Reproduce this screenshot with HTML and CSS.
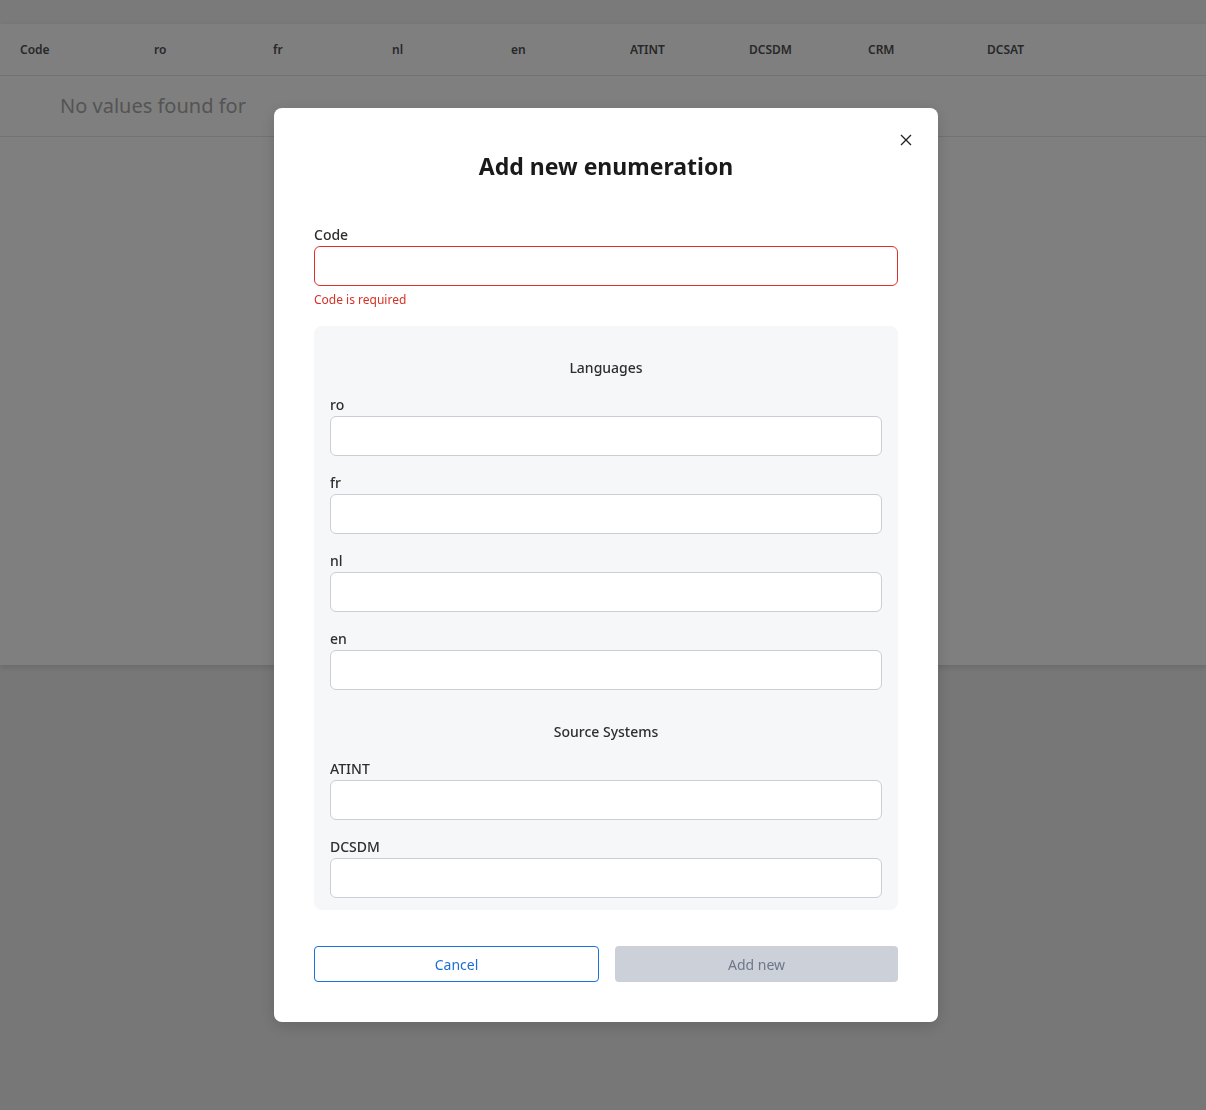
FILE: index.html
```html
<!DOCTYPE html>
<html lang="en">
<head>
  <meta charset="UTF-8">
  <meta name="viewport" content="width=device-width, initial-scale=1.0">
  <title>Enumerations</title>
  <link rel="stylesheet" href="styles.css">
</head>
<body>
  <div class="topbar"></div>
  <div class="panel">
    <div class="table-head">
      <div class="cell first">Code</div>
      <div class="cell">ro</div>
      <div class="cell">fr</div>
      <div class="cell">nl</div>
      <div class="cell">en</div>
      <div class="cell">ATINT</div>
      <div class="cell">DCSDM</div>
      <div class="cell">CRM</div>
      <div class="cell">DCSAT</div>
    </div>
    <div class="empty-row">No values found for</div>
  </div>

  <div class="overlay">
    <div class="modal">
      <button type="button" class="close-button" aria-label="Close">
        <svg width="12" height="12" viewBox="0 0 12 12"><path d="M1 1L11 11M11 1L1 11" stroke="#222" stroke-width="1.3" fill="none"/></svg>
      </button>
      <h2 class="modal-title">Add new enumeration</h2>

      <div class="field">
        <label for="code">Code</label>
        <input id="code" type="text" class="invalid">
        <div class="error">Code is required</div>
      </div>

      <div class="group-box">
        <div class="section">
          <div class="section-title">Languages</div>
          <div class="field"><label>ro</label><input type="text"></div>
          <div class="field"><label>fr</label><input type="text"></div>
          <div class="field"><label>nl</label><input type="text"></div>
          <div class="field"><label>en</label><input type="text"></div>
        </div>
        <div class="section">
          <div class="section-title">Source Systems</div>
          <div class="field"><label>ATINT</label><input type="text"></div>
          <div class="field"><label>DCSDM</label><input type="text"></div>
        </div>
      </div>

      <div class="button-row">
        <button type="button" class="cancel-button">Cancel</button>
        <button type="button" class="add-button" disabled>Add new</button>
      </div>
    </div>
  </div>
</body>
</html>
```

FILE: styles.css
```css
body {
  margin: 0;
  font-family: "Noto Sans", "Open Sans", sans-serif;
  background-color: #eeeeee;
  height: 1110px;
  overflow: hidden;
}

.topbar {
  height: 24px;
  background-color: #f5f5f5;
}

.panel {
  background-color: #ffffff;
  height: 641px;
  box-shadow: 0 2px 6px rgba(0, 0, 0, 0.12);
}

.table-head {
  display: flex;
  height: 51px;
  align-items: center;
  border-bottom: 1px solid #e4e4e4;
}
.cell {
  width: 119px;
  padding-left: 20px;
  box-sizing: border-box;
  font-size: 12px;
  font-weight: 600;
  color: #505050;
}
.cell.first {
  width: 134px;
}

.empty-row {
  height: 60px;
  line-height: 60px;
  padding-left: 60px;
  font-size: 20px;
  color: #a8a8a8;
  border-bottom: 1px solid #e4e4e4;
}

.overlay {
  position: fixed;
  inset: 0;
  padding-left: 6px;
  background-color: rgba(0, 0, 0, 0.5);
  display: flex;
  justify-content: center;
  align-items: flex-start;
}

.modal {
  position: relative;
  margin-top: 108px;
  width: 664px;
  box-sizing: border-box;
  padding: 42px 40px 40px;
  background-color: #ffffff;
  border-radius: 8px;
  box-shadow: 0 4px 16px rgba(0, 0, 0, 0.15);
}

.close-button {
  position: absolute;
  top: 26px;
  right: 26px;
  width: 12px;
  height: 12px;
  padding: 0;
  border: none;
  background: none;
  cursor: pointer;
  display: flex;
}

.modal-title {
  margin: 0 0 43px;
  text-align: center;
  font-size: 23px;
  line-height: 32px;
  font-weight: 700;
  color: #1a1a1a;
}

.field label {
  display: block;
  font-size: 14px;
  line-height: 20px;
  margin-bottom: 1px;
  font-weight: 500;
  color: #2e2e2e;
}
.field input {
  display: block;
  width: 100%;
  height: 40px;
  box-sizing: border-box;
  border: 1px solid #c9ced7;
  border-radius: 6px;
  background-color: #ffffff;
  font-family: inherit;
  font-size: 14px;
  padding: 0 12px;
  outline: none;
}
.field input.invalid {
  border-color: #dc3126;
}
.error {
  margin-top: 5px;
  font-size: 12px;
  line-height: 17px;
  color: #d93025;
}

.group-box {
  margin-top: 18px;
  background-color: #f6f7f9;
  border-radius: 8px;
  padding: 0 16px 12px;
}

.section {
  padding-top: 32px;
}
.section-title {
  text-align: center;
  font-size: 14px;
  line-height: 20px;
  font-weight: 500;
  color: #2e2e2e;
  margin-bottom: 17px;
}
.section .field + .field {
  margin-top: 17px;
}

.button-row {
  display: flex;
  gap: 16px;
  margin-top: 36px;
}
.cancel-button, .add-button {
  flex: 1;
  height: 36px;
  border-radius: 4px;
  font-family: inherit;
  font-size: 14px;
  cursor: pointer;
}
.cancel-button {
  background-color: #ffffff;
  border: 1px solid #1a73d9;
  color: #1a6fd6;
}
.add-button {
  background-color: #cbd0d9;
  border: none;
  color: #6f7787;
  cursor: default;
}
```
